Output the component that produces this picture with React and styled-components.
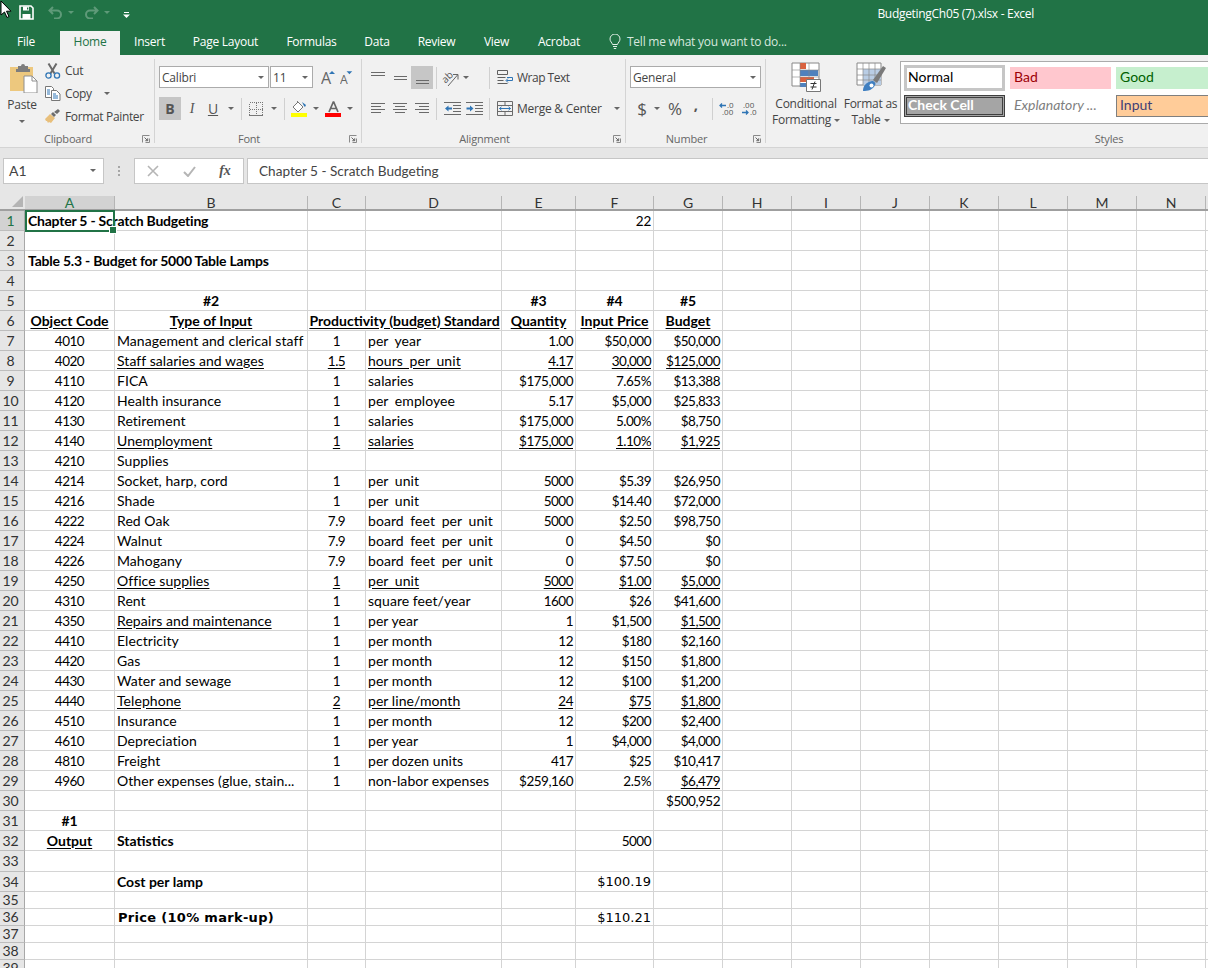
import React from "react";
import styled, { createGlobalStyle } from "styled-components";

const UI_FONT = `"Open Sans", "Noto Sans", sans-serif`;
const CELL_FONT = `Lato, "Open Sans", sans-serif`;
const WIDE_FONT = `"DejaVu Sans", sans-serif`;

const GlobalStyle = createGlobalStyle`
  html, body {
    margin: 0;
    padding: 0;
    width: 1208px;
    height: 968px;
    overflow: hidden;
    background: #fff;
    font-family: ${UI_FONT};
  }
  * { box-sizing: border-box; }
`;

const Page = styled.div`
  width: 1208px;
  height: 968px;
  overflow: hidden;
  display: flex;
  flex-direction: column;
`;

/* title bar */
const TitleBar = styled.div`
  height: 31px;
  background: #217346;
  display: flex;
  align-items: center;
  color: #fff;
  flex: none;
`;

const QuickAccess = styled.div`
  display: flex;
  align-items: center;
  height: 100%;
`;

const WindowTitle = styled.div`
  margin-left: auto;
  margin-right: 174px;
  font-size: 12px;
  letter-spacing: -0.3px;
  margin-top: -4px;
  white-space: nowrap;
`;

const TabBar = styled.div`
  height: 24px;
  background: #217346;
  display: flex;
  align-items: stretch;
  flex: none;
`;

const Tab = styled.div`
  width: ${(p) => p.$w}px;
  display: flex;
  align-items: center;
  justify-content: center;
  font-size: 12px;
  letter-spacing: -0.25px;
  padding-bottom: 3px;
  color: ${(p) => (p.$active ? "#217346" : "#fff")};
  background: ${(p) => (p.$active ? "#f1f1f1" : "transparent")};
  margin-right: ${(p) => p.$mr || 0}px;
`;

const TellMe = styled.div`
  margin-left: 14px;
  display: flex;
  align-items: center;
  gap: 6px;
  font-size: 12px;
  letter-spacing: -0.25px;
  padding-bottom: 3px;
  color: #d7e8de;
`;

/* ribbon */
const Ribbon = styled.div`
  height: 93px;
  background: #f1f1f1;
  border-bottom: 1px solid #d4d4d4;
  display: flex;
  flex: none;
  overflow: hidden;
`;

const Group = styled.div`
  width: ${(p) => p.$w}px;
  flex: none;
  display: flex;
  flex-direction: column;
  padding-left: ${(p) => p.$pad || 0}px;
`;

const GroupBody = styled.div`
  height: 75px;
  flex: none;
  display: flex;
  flex-direction: ${(p) => (p.$row ? "row" : "column")};
`;

const GroupFooter = styled.div`
  display: flex;
  align-items: center;
  height: 16px;
  margin-left: -${(p) => p.$pad || 0}px;
  padding-left: ${(p) => p.$indent || 0}px;
`;

const GroupLabel = styled.div`
  flex: 1;
  text-align: center;
  font-size: 11px;
  letter-spacing: -0.2px;
  color: #666;
`;

const Launcher = styled.svg`
  width: 8px;
  height: 8px;
  margin: 1px 4px 0 6px;
  flex: none;
`;

const GroupSep = styled.div`
  width: 1px;
  flex: none;
  margin: 4px 0;
  background: #d4d4d4;
`;

const ToolRow = styled.div`
  display: flex;
  align-items: center;
  height: ${(p) => p.$h || 23}px;
  margin-top: ${(p) => p.$mt || 0}px;
`;

const ToolBtn = styled.div`
  width: ${(p) => p.$w}px;
  height: 100%;
  flex: none;
  display: flex;
  align-items: center;
  justify-content: center;
  margin-left: ${(p) => p.$ml || 0}px;
  color: #555;
  background: ${(p) => (p.$active ? "#c6c6c6" : "transparent")};
`;

const ToolSep = styled.div`
  width: 1px;
  height: 22px;
  flex: none;
  background: #d0d0d0;
  margin-left: ${(p) => p.$ml || 0}px;
`;

const Caret = styled.i`
  display: block;
  width: 0;
  height: 0;
  flex: none;
  border-left: 3px solid transparent;
  border-right: 3px solid transparent;
  border-top: 3px solid ${(p) => p.$color || "#666"};
  margin-left: ${(p) => p.$ml || 0}px;
  margin-right: ${(p) => p.$mr || 0}px;
  margin-top: ${(p) => p.$mt || 0}px;
`;

const Select = styled.div`
  width: ${(p) => p.$w}px;
  height: 22px;
  flex: none;
  background: #fff;
  border: 1px solid #ababab;
  margin-left: ${(p) => p.$ml || 0}px;
  display: flex;
  align-items: center;
  justify-content: space-between;
  padding: 0 4px 0 2px;
  font-size: 12px;
  letter-spacing: -0.2px;
  color: #444;
`;

/* clipboard */
const PasteBtn = styled.div`
  width: 44px;
  flex: none;
  display: flex;
  flex-direction: column;
  align-items: center;
  padding-top: 8px;
  font-size: 12px;
  letter-spacing: -0.2px;
  color: #444;
`;

const PasteText = styled.div`
  margin-top: 4px;
  line-height: 16px;
`;

const ClipList = styled.div`
  padding-top: 4px;
  margin-left: 1px;
`;

const ClipItem = styled.div`
  height: 23px;
  display: flex;
  align-items: center;
  gap: 4px;
  font-size: 12px;
  letter-spacing: -0.35px;
  color: #444;
  white-space: nowrap;
`;

const IconSlot = styled.div`
  width: 16px;
  display: flex;
  justify-content: center;
  flex: none;
`;

const LabelBtn = styled.div`
  display: flex;
  align-items: center;
  margin-left: ${(p) => p.$ml || 0}px;
  gap: ${(p) => p.$gap || 4}px;
  font-size: 12px;
  letter-spacing: ${(p) => p.$track || -0.25}px;
  color: #444;
  white-space: nowrap;
`;

const BigBtn = styled.div`
  width: ${(p) => p.$w}px;
  flex: none;
  display: flex;
  flex-direction: column;
  align-items: center;
  padding-top: 7px;
  font-size: 12px;
  letter-spacing: -0.25px;
  line-height: 16px;
  color: #444;
  white-space: nowrap;
`;

const BigText = styled.div`
  margin-top: ${(p) => p.$mt || 0}px;
  display: flex;
  align-items: center;
  gap: 3px;
`;

const Gallery = styled.div`
  margin-top: 6px;
  width: 320px;
  height: 63px;
  background: #fff;
  border: 1px solid #ababab;
  padding: 3px;
  display: grid;
  grid-template-columns: 101px 101px 110px;
  grid-template-rows: 26px 26px;
  column-gap: 5px;
  row-gap: 2px;
  flex: none;
`;

const StyleChip = styled.div`
  font-family: ${CELL_FONT};
  font-size: 14px;
  display: flex;
  align-items: center;
  padding-left: ${(p) => p.$indent ?? 4}px;
  padding-bottom: 3px;
  white-space: nowrap;
  margin: ${(p) => (p.$flush ? "0" : "2px 0")};
  color: ${(p) => p.$color};
  background: ${(p) => p.$bg || "transparent"};
  border: ${(p) => p.$border || "none"};
  font-weight: ${(p) => (p.$bold ? 700 : 400)};
  font-style: ${(p) => (p.$italic ? "italic" : "normal")};
`;

/* formula bar */
const FormulaBar = styled.div`
  height: 45px;
  background: #e6e6e6;
  flex: none;
  display: flex;
  padding: 10px 0 9px 3px;
`;

const NameBox = styled.div`
  width: 101px;
  background: #fff;
  border: 1px solid #c6c6c6;
  display: flex;
  align-items: center;
  justify-content: space-between;
  padding: 0 7px 1px 5px;
  font-family: ${CELL_FONT};
  font-size: 14px;
  color: #444;
`;

const Dots = styled.div`
  width: 30px;
  flex: none;
  display: flex;
  flex-direction: column;
  align-items: center;
  justify-content: center;
  gap: 2px;
  i {
    width: 2px;
    height: 2px;
    background: #a6a6a6;
    display: block;
  }
`;

const FxBox = styled.div`
  width: 110px;
  background: #fff;
  border: 1px solid #c6c6c6;
  display: flex;
  align-items: center;
  flex: none;
`;

const FxSlot = styled.div`
  width: 36px;
  flex: none;
  display: flex;
  justify-content: center;
  align-items: center;
`;

const FxMark = styled.span`
  font-family: "Liberation Serif", serif;
  font-style: italic;
  font-weight: 700;
  font-size: 14px;
  color: #555;
`;

const FormulaInput = styled.div`
  flex: 1;
  margin-left: 3px;
  background: #fff;
  border: 1px solid #c6c6c6;
  border-right: none;
  display: flex;
  align-items: center;
  padding: 0 0 1px 11px;
  font-family: ${CELL_FONT};
  font-size: 13.6px;
  color: #444;
`;

/* sheet */
const COLUMNS = "25px 90px 193px 58px 136px 74px 78px 69px 69px 69px 69px 69px 69px 69px 69px 4px";

const Sheet = styled.div`
  position: relative;
  flex: 1;
  font-family: ${CELL_FONT};
  font-size: 14px;
  color: #000;
  overflow: hidden;
`;

const SheetRow = styled.div`
  display: grid;
  grid-template-columns: ${COLUMNS};
  grid-template-rows: minmax(0, 1fr);
  height: ${(p) => p.$h}px;
`;

const HeaderRow = styled(SheetRow)`
  background: #e6e6e6;
  border-bottom: 2px solid #9f9f9f;
`;

const Corner = styled.div`
  position: relative;
  &::after {
    content: "";
    position: absolute;
    right: 2px;
    bottom: 2px;
    width: 0;
    height: 0;
    border-left: 11px solid transparent;
    border-bottom: 11px solid #b4b4b4;
  }
`;

const ColHead = styled.div`
  display: flex;
  align-items: center;
  justify-content: center;
  line-height: 14px;
  color: ${(p) => (p.$selected ? "#217346" : "#333")};
  background: ${(p) => (p.$selected ? "#d2d2d2" : "transparent")};
  border-right: 1px solid #b5b5b5;
  margin-top: 3px;
`;

const RowHead = styled.div`
  background: ${(p) => (p.$selected ? "#d2d2d2" : "#e6e6e6")};
  color: ${(p) => (p.$selected ? "#217346" : "#333")};
  border-bottom: 1px solid #bdbdbd;
  border-right: 1px solid #a8a8a8;
  display: flex;
  align-items: center;
  justify-content: center;
  padding-right: 3px;
  line-height: 14px;
  overflow: hidden;
`;

const Cell = styled.div`
  grid-column: span ${(p) => p.$span || 1};
  border-right: 1px solid #d4d4d4;
  border-bottom: 1px solid #d4d4d4;
  display: flex;
  align-items: center;
  justify-content: ${(p) => p.$justify};
  padding: ${(p) => (p.$wide ? 1 : 0)}px 2px 0 ${(p) => p.$left || 2}px;
  white-space: nowrap;
  min-width: 0;
  line-height: 14px;
  font-family: ${(p) => (p.$wide ? WIDE_FONT : CELL_FONT)};
  font-size: ${(p) => (p.$wide ? "13px" : p.$num ? "13.5px" : "14px")};
  font-weight: ${(p) => (p.$bold ? 700 : 400)};
  letter-spacing: ${(p) => p.$track}px;
  word-spacing: ${(p) => (p.$spaced ? "3px" : "0")};
  text-decoration: ${(p) => (p.$under ? "underline" : "none")};
  text-underline-offset: 2px;
`;

const Selection = styled.div`
  position: absolute;
  left: 25px;
  top: 17px;
  width: 90px;
  height: 22px;
  border: 2px solid #217346;
  pointer-events: none;
  &::after {
    content: "";
    position: absolute;
    right: -4px;
    bottom: -4px;
    width: 6px;
    height: 6px;
    background: #217346;
    border: 1px solid #fff;
  }
`;

/* drawings */
const PointerSvg = styled.svg`
  position: absolute;
  left: 0;
  top: 0;
`;

const Arrow = () => (
  <PointerSvg width="12" height="19" viewBox="0 0 12 19">
    <path d="M1 1v14l3.5-3 2.5 5.5 2-1-2.500-5.300h4.500z" fill="#fff" stroke="#000" />
  </PointerSvg>
);

const SaveIcon = () => (
  <svg width="15" height="15" viewBox="0 0 15 15" style={{ marginLeft: 19, marginTop: -6 }}>
    <path d="M1 1h11l2 2v11H1z" fill="none" stroke="#fff" strokeWidth="1.600" />
    <path d="M4 1.500h6v4H4zM3.500 9h8v5h-8z" fill="#fff" />
    <path d="M8 2.500h1.300v2H8z" fill="#217346" />
  </svg>
);

const UndoIcon = ({ flip, ml }) => (
  <svg width="15" height="13" viewBox="0 0 15 13" style={{ marginLeft: ml, marginTop: -6, transform: flip ? "scaleX(-1)" : "none" }}>
    <path d="M5 1L1.500 4.500 5 8M2 4.500h7a4 4 0 0 1 0 8H6" fill="none" stroke="#5f9a79" strokeWidth="2" />
  </svg>
);

const QatMenu = () => (
  <svg width="7" height="6" viewBox="0 0 7 6" style={{ marginLeft: 13, marginTop: -2 }}>
    <path d="M1 0h5v1H1zM0 2.500h7L3.500 6z" fill="#fff" />
  </svg>
);

const Bulb = () => (
  <svg width="12" height="15" viewBox="0 0 12 15">
    <path d="M3.500 10.500C3 8.500 1 7.500 1 5a5 5 0 0 1 10 0c0 2.500-2 3.500-2.500 5.500zM4 12.500h4M4.800 14.500h2.400" fill="none" stroke="#e3efe8" />
  </svg>
);

const LauncherIcon = () => (
  <Launcher viewBox="0 0 8 8">
    <path d="M.5 7.500v-7h7M7.500 3.500v4h-4" fill="none" stroke="#8a8a8a" />
    <path d="M2.500 2.500l3 3M5.700 3.300v2.400H3.300" fill="none" stroke="#666" />
  </Launcher>
);

const PasteIcon = () => (
  <svg width="30" height="30" viewBox="0 0 30 30" style={{ marginLeft: 4 }}>
    <path d="M1 4h23v24H1z" fill="#edc87e" />
    <path d="M9 2h3a2 2 0 0 1 4 0h3v3h2v3H7V5h2z" fill="#7d7d7d" transform="translate(0 1)" />
    <path d="M15 13h8l5 5v12H15z" fill="#fff" stroke="#8f8f8f" />
    <path d="M23 13v5h5" fill="none" stroke="#8f8f8f" />
  </svg>
);

const ScissorsIcon = () => (
  <svg width="16" height="16" viewBox="0 0 16 16">
    <path d="M3.500 0.500l6 10M11.500 0.500l-6 10" stroke="#6a6a6a" strokeWidth="2" fill="none" />
    <circle cx="3.500" cy="12.500" r="2.600" fill="none" stroke="#2f75b5" strokeWidth="1.300" />
    <circle cx="12" cy="12.500" r="2.600" fill="none" stroke="#2f75b5" strokeWidth="1.300" />
  </svg>
);

const CopyIcon = () => (
  <svg width="16" height="15" viewBox="0 0 16 15">
    <path d="M.5.500h6l2 2v9h-8z" fill="#fff" stroke="#777" />
    <path d="M6.500 4.500h5l3.500 3.500v6.500H6.500z" fill="#fff" stroke="#777" />
    <path d="M2 4h3M2 6h3M2 8h3M8 8h3M8 10h5M8 12h5" stroke="#2f75b5" />
  </svg>
);

const PainterIcon = () => (
  <svg width="16" height="15" viewBox="0 0 16 15">
    <path d="M0 10l5-5 5 4-4 5-2-1-1 1-1-2-1 0z" fill="#e8bf7b" />
    <path d="M6 5l2-2 3 3-2 2zM9 3l4-3 2 2-3 3z" fill="#6e6e6e" />
  </svg>
);

const GrowIcon = ({ shrink }) => (
  <svg width="17" height="22" viewBox="0 0 17 22">
    <text x="0" y="18" fontFamily="Open Sans, sans-serif" fontSize={shrink ? 13 : 16} fill="#666">A</text>
    <path d={shrink ? "M7 5h6l-3 3z" : "M8 8h6l-3-3z"} fill="#2f75b5" />
  </svg>
);

const LetterB = styled.span`
  font-size: ${(p) => p.$size || 14}px;
  color: #555;
  font-weight: ${(p) => (p.$b ? 700 : 400)};
  font-style: ${(p) => (p.$i ? "italic" : "normal")};
  text-decoration: ${(p) => (p.$u ? "underline" : "none")};
  font-family: ${(p) => (p.$i ? `"Liberation Serif", serif` : UI_FONT)};
  margin-top: ${(p) => p.$mt || 0}px;
`;

const BordersIcon = () => (
  <svg width="14" height="14" viewBox="0 0 14 14" shapeRendering="crispEdges">
    <path d="M.5.500h13v13H.500zM7 .5v13M.5 7h13" fill="none" stroke="#777" strokeDasharray="1 1" />
    <path d="M0 13.500h14" stroke="#777" />
  </svg>
);

const FillIcon = () => (
  <svg width="17" height="17" viewBox="0 0 17 17">
    <path d="M2 7l5-5 5 5-5 5z" fill="#fff" stroke="#777" />
    <path d="M6 1l3 3" stroke="#777" />
    <path d="M11 2l4 3-1 2-1-1z" fill="#2f75b5" />
    <path d="M0 13h16v4H0z" fill="#ffff00" />
  </svg>
);

const FontColorIcon = () => (
  <svg width="17" height="17" viewBox="0 0 17 17">
    <path d="M8.500 1.500L4 12M8.500 1.500L13 12M5.800 8.500h5.400" fill="none" stroke="#666" strokeWidth="1.700" />
    <path d="M0 13h16v4H0z" fill="#ff0000" />
  </svg>
);

// text alignment glyph: rows of [x1, x2, y]
const LinesIcon = ({ lines }) => (
  <svg width="16" height="16" viewBox="0 0 16 16">
    {lines.map(([a, b, y], i) => (
      <path key={i} d={`M${a} ${y}.5H${b}`} stroke="#6a6a6a" />
    ))}
  </svg>
);

const OrientIcon = () => (
  <svg width="20" height="22" viewBox="0 0 20 22">
    <text x="2" y="14" transform="rotate(-45 7 11)" fontFamily="Open Sans, sans-serif" fontSize="10" fill="#555">ab</text>
    <path d="M8 19L17.500 8M13 7.500h5V12.500" fill="none" stroke="#666" />
  </svg>
);

const WrapIcon = () => (
  <svg width="17" height="17" viewBox="0 0 17 17">
    <path d="M.5 1.500h10v4H.5zM.5 8.500h8M.5 11.500h6M.5 14.500h10" fill="none" stroke="#5f5f5f" />
    <path d="M10 8.500h5.500v3h-6M11 9.500l-2 2 2 2" fill="none" stroke="#2f75b5" />
  </svg>
);

const MergeIcon = () => (
  <svg width="16" height="15" viewBox="0 0 16 15">
    <path d="M.5.500h15v14H.5zM.5 4.500h15M.5 10.500h15M8 .5v4M8 10.500v4" fill="none" stroke="#6a6a6a" />
    <path d="M2.500 7.500h11M4.500 5.800l-2 1.700 2 1.700M11.500 5.800l2 1.700-2 1.700" fill="none" stroke="#2f75b5" />
  </svg>
);

const IndentIcon = ({ out }) => (
  <svg width="17" height="13" viewBox="0 0 17 13">
    <path d="M0 .5h17M9 3.500h8M9 6.500h8M9 9.500h8M0 12.500h17" stroke="#6a6a6a" />
    <path d={out ? "M1 6.500l3.500-3v2h3.500v2H4.500v2z" : "M7.500 6.500l-3.500-3v2H.5v2H4v2z"} fill="#2f75b5" />
  </svg>
);

const DecimalIcon = ({ inc }) => (
  <svg width="16" height="15" viewBox="0 0 16 15">
    <text x={inc ? 2 : 8} y="7" fontFamily="Open Sans, sans-serif" fontSize="8" fill="#555">{inc ? ".00" : ".0"}</text>
    <text x={inc ? 9 : 3} y="14" fontFamily="Open Sans, sans-serif" fontSize="8" fill="#555">{inc ? ".0" : ".00"}</text>
    <path d={inc ? "M1 11.500h6M5 9.500l2 2-2 2" : "M1 4.500h6M3 2.500l-2 2 2 2"} fill="none" stroke="#2f75b5" strokeWidth="1.300" />
  </svg>
);

const ConditionalIcon = () => (
  <svg width="30" height="30" viewBox="0 0 30 30">
    <path d="M1 1h27v23H1z" fill="#fff" stroke="#888" />
    <path d="M9 1h6v6H9z" fill="#d9623f" />
    <path d="M9 8h18v6H9z" fill="#4f81bd" />
    <path d="M9 15h14v5H9z" fill="#d9623f" />
    <path d="M9 21h6v4H9z" fill="#4f81bd" />
    <path d="M1 8h27M1 15h27M9 1v24M18 1v15" stroke="#888" fill="none" strokeWidth=".6" />
    <path d="M15.500 17.500h14v12h-14z" fill="#fff" stroke="#777" />
    <path d="M19.500 21.500h6M19.500 25h6M24 19.500l-3 8" stroke="#333" />
  </svg>
);

const TableIcon = () => (
  <svg width="30" height="30" viewBox="0 0 30 30">
    <path d="M1 1h24v22H1z" fill="#fff" stroke="#888" />
    <path d="M7 7h18v16H7z" fill="#b9cde5" />
    <path d="M1 7h24M1 13h24M1 18h24M7 1v22M13 1v22M19 1v22" stroke="#8a8a8a" strokeWidth=".7" />
    <path d="M17 18l10-14 3 2-9 15z" fill="#7a7a7a" />
    <path d="M7 29c0-6 4-9 9-10 2 0 4 2 3 4-2 5-7 6-12 6z" fill="#3f7fc1" />
    <circle cx="15.500" cy="23.500" r="2" fill="#fff" />
  </svg>
);

const Launch = ({ indent, label, launcher = true, pad }) => (
  <GroupFooter $indent={indent} $pad={pad}>
    <GroupLabel>{label}</GroupLabel>
    {launcher && <LauncherIcon />}
  </GroupFooter>
);

const TABS = [
  ["File", 52, 8],
  ["Home", 60],
  ["Insert", 59],
  ["Page Layout", 93],
  ["Formulas", 79],
  ["Data", 52],
  ["Review", 67],
  ["View", 53],
  ["Acrobat", 72],
];

const alignTop = [[1, 15, 2], [1, 15, 5]];
const alignMid = [[2, 15, 6], [2, 15, 9]];
const alignBottom = [[2, 15, 10], [2, 15, 13]];
const alignLeft = [[1, 15, 2], [1, 11, 5], [1, 15, 8], [1, 11, 11]];
const alignCenter = [[1, 15, 2], [3, 13, 5], [1, 15, 8], [3, 13, 11]];
const alignRight = [[1, 15, 2], [5, 15, 5], [1, 15, 8], [5, 15, 11]];

const Toolbar = () => (
  <Ribbon>
    <Group $w={154}>
      <GroupBody $row>
        <PasteBtn>
          <PasteIcon />
          <PasteText>Paste</PasteText>
          <Caret $mt={7} />
        </PasteBtn>
        <ClipList>
          <ClipItem>
            <IconSlot><ScissorsIcon /></IconSlot>
            Cut
          </ClipItem>
          <ClipItem>
            <IconSlot><CopyIcon /></IconSlot>
            Copy
            <Caret $ml={8} />
          </ClipItem>
          <ClipItem>
            <IconSlot><PainterIcon /></IconSlot>
            Format Painter
          </ClipItem>
        </ClipList>
      </GroupBody>
      <Launch label="Clipboard" />
    </Group>
    <GroupSep />

    <Group $w={206} $pad={4}>
      <GroupBody>
        <ToolRow $h={22} $mt={11}>
          <Select $w={110}>
            Calibri
            <Caret />
          </Select>
          <Select $w={43} $ml={1}>
            11
            <Caret />
          </Select>
          <ToolBtn $w={21} $ml={6}><GrowIcon /></ToolBtn>
          <ToolBtn $w={16}><GrowIcon shrink /></ToolBtn>
        </ToolRow>
        <ToolRow $mt={9}>
          <ToolBtn $w={22} $active><LetterB $b>B</LetterB></ToolBtn>
          <ToolBtn $w={22}><LetterB $i>I</LetterB></ToolBtn>
          <ToolBtn $w={20}><LetterB $u>U</LetterB></ToolBtn>
          <Caret $ml={5} $mr={5} />
          <ToolSep $ml={2} />
          <ToolBtn $w={28}><BordersIcon /></ToolBtn>
          <Caret $ml={1} $mr={1} />
          <ToolSep $ml={6} />
          <ToolBtn $w={28}><FillIcon /></ToolBtn>
          <Caret />
          <ToolBtn $w={28}><FontColorIcon /></ToolBtn>
          <Caret />
        </ToolRow>
      </GroupBody>
      <Launch label="Font" pad={4} />
    </Group>
    <GroupSep />

    <Group $w={263} $pad={5}>
      <GroupBody>
        <ToolRow $mt={11}>
          <ToolBtn $w={22}><LinesIcon lines={alignTop} /></ToolBtn>
          <ToolBtn $w={22}><LinesIcon lines={alignMid} /></ToolBtn>
          <ToolBtn $w={22} $active><LinesIcon lines={alignBottom} /></ToolBtn>
          <ToolSep $ml={3} />
          <ToolBtn $w={26}><OrientIcon /></ToolBtn>
          <Caret />
          <ToolSep $ml={20} />
          <LabelBtn $ml={7} $gap={3} $track={-0.5}>
            <WrapIcon />
            Wrap Text
          </LabelBtn>
        </ToolRow>
        <ToolRow $mt={8}>
          <ToolBtn $w={22}><LinesIcon lines={alignLeft} /></ToolBtn>
          <ToolBtn $w={22}><LinesIcon lines={alignCenter} /></ToolBtn>
          <ToolBtn $w={22}><LinesIcon lines={alignRight} /></ToolBtn>
          <ToolSep $ml={3} />
          <ToolBtn $w={22} $ml={4}><IndentIcon out /></ToolBtn>
          <ToolBtn $w={22}><IndentIcon /></ToolBtn>
          <ToolSep $ml={4} />
          <LabelBtn $ml={7}>
            <MergeIcon />
            Merge &amp; Center
            <Caret $ml={8} />
          </LabelBtn>
        </ToolRow>
      </GroupBody>
      <Launch label="Alignment" pad={5} />
    </Group>
    <GroupSep />

    <Group $w={139} $pad={4}>
      <GroupBody>
        <ToolRow $h={22} $mt={11}>
          <Select $w={131}>
            General
            <Caret />
          </Select>
        </ToolRow>
        <ToolRow $mt={9}>
          <ToolBtn $w={24}><LetterB $size={17}>$</LetterB></ToolBtn>
          <Caret />
          <ToolBtn $w={30}><LetterB $size={17}>%</LetterB></ToolBtn>
          <ToolBtn $w={12}><LetterB $b $size={15} $mt={-10}>,</LetterB></ToolBtn>
          <ToolSep $ml={10} />
          <ToolBtn $w={28}><DecimalIcon /></ToolBtn>
          <ToolBtn $w={16}><DecimalIcon inc /></ToolBtn>
        </ToolRow>
      </GroupBody>
      <Launch label="Number" pad={4} />
    </Group>
    <GroupSep />

    <Group $w={442} $pad={5}>
      <GroupBody $row>
        <BigBtn $w={70}>
          <ConditionalIcon />
          <BigText $mt={4}>Conditional</BigText>
          <BigText>Formatting<Caret /></BigText>
        </BigBtn>
        <BigBtn $w={59}>
          <TableIcon />
          <BigText $mt={4}>Format as</BigText>
          <BigText>Table<Caret /></BigText>
        </BigBtn>
        <Gallery>
          <StyleChip $flush $indent={1} $color="#000" $bg="#fff" $border="3px solid #c6c6c6">Normal</StyleChip>
          <StyleChip $color="#9c0006" $bg="#ffc7ce">Bad</StyleChip>
          <StyleChip $color="#006100" $bg="#c6efce">Good</StyleChip>
          <StyleChip $bold $indent={1} $color="#fff" $bg="#a5a5a5" $border="3px double #3f3f3f">Check Cell</StyleChip>
          <StyleChip $italic $color="#7f7f7f">Explanatory ...</StyleChip>
          <StyleChip $indent={3} $color="#3f3f76" $bg="#ffcc99" $border="1px solid #7f7f7f">Input</StyleChip>
        </Gallery>
      </GroupBody>
      <Launch label="Styles" launcher={false} pad={5} indent={244} />
    </Group>
  </Ribbon>
);

const COLS = ["A", "B", "C", "D", "E", "F", "G", "H", "I", "J", "K", "L", "M", "N"];
const JUSTIFY = { 0: "center", 1: "flex-start", 2: "center", 3: "flex-start", 4: "flex-end", 5: "flex-end", 6: "flex-end" };
const NUMERIC = /^[$\d.,%]+$/;

// row data: [A, B, C, D, E, F, G], under lists the underlined column indexes
const data = (cells, extra) => ({ cells, ...extra });
const LINE = [1, 2, 3, 4, 5, 6];

const ROWS = {
  1: data(["Chapter 5 - Scratch Budgeting", null, "", "", "", "22", ""], { boldCols: [0], leftFirst: true, tight: true }),
  3: data(["Table 5.3 - Budget for 5000 Table Lamps", null], { boldCols: [0], leftFirst: true, tight: true }),
  5: data(["", "#2", "", "", "#3", "#4", "#5"], { bold: true, centered: true }),
  6: data(["Object Code", "Type of Input", "Productivity (budget) Standard", null, "Quantity", "Input Price", "Budget"], {
    bold: true,
    centered: true,
    under: [0, 1, 2, 4, 5, 6],
  }),
  7: data(["4010", "Management and clerical staff", "1", "per year", "1.00", "$50,000", "$50,000"], { spaced: true }),
  8: data(["4020", "Staff salaries and wages", "1.5", "hours per unit", "4.17", "30,000", "$125,000"], { spaced: true, under: LINE }),
  9: data(["4110", "FICA", "1", "salaries", "$175,000", "7.65%", "$13,388"]),
  10: data(["4120", "Health insurance", "1", "per employee", "5.17", "$5,000", "$25,833"], { spaced: true }),
  11: data(["4130", "Retirement", "1", "salaries", "$175,000", "5.00%", "$8,750"]),
  12: data(["4140", "Unemployment", "1", "salaries", "$175,000", "1.10%", "$1,925"], { under: LINE }),
  13: data(["4210", "Supplies"]),
  14: data(["4214", "Socket, harp, cord", "1", "per unit", "5000", "$5.39", "$26,950"], { spaced: true }),
  15: data(["4216", "Shade", "1", "per unit", "5000", "$14.40", "$72,000"], { spaced: true }),
  16: data(["4222", "Red Oak", "7.9", "board feet per unit", "5000", "$2.50", "$98,750"], { spaced: true }),
  17: data(["4224", "Walnut", "7.9", "board feet per unit", "0", "$4.50", "$0"], { spaced: true }),
  18: data(["4226", "Mahogany", "7.9", "board feet per unit", "0", "$7.50", "$0"], { spaced: true }),
  19: data(["4250", "Office supplies", "1", "per unit", "5000", "$1.00", "$5,000"], { spaced: true, under: LINE }),
  20: data(["4310", "Rent", "1", "square feet/year", "1600", "$26", "$41,600"]),
  21: data(["4350", "Repairs and maintenance", "1", "per year", "1", "$1,500", "$1,500"], { under: [1, 6] }),
  22: data(["4410", "Electricity", "1", "per month", "12", "$180", "$2,160"]),
  23: data(["4420", "Gas", "1", "per month", "12", "$150", "$1,800"]),
  24: data(["4430", "Water and sewage", "1", "per month", "12", "$100", "$1,200"]),
  25: data(["4440", "Telephone", "2", "per line/month", "24", "$75", "$1,800"], { under: LINE }),
  26: data(["4510", "Insurance", "1", "per month", "12", "$200", "$2,400"]),
  27: data(["4610", "Depreciation", "1", "per year", "1", "$4,000", "$4,000"]),
  28: data(["4810", "Freight", "1", "per dozen units", "417", "$25", "$10,417"]),
  29: data(["4960", "Other expenses (glue, stain...", "1", "non-labor expenses", "$259,160", "2.5%", "$6,479"], { under: [6] }),
  30: data(["", "", "", "", "", "", "$500,952"]),
  31: data(["#1"], { boldCols: [0] }),
  32: data(["Output", "Statistics", "", "", "", "5000"], { boldCols: [0, 1], under: [0] }),
  34: data(["", "Cost per lamp", "", "", "", "$100.19"], { boldCols: [1], wideCols: [5] }),
  36: data(["", "Price (10% mark-up)", "", "", "", "$110.21"], { boldCols: [1], wideCols: [1, 5] }),
};

const rowHeight = (n) => {
  if (n === 33) return 21;
  if (n >= 35) return 17;
  return 20;
};

// per-cell tracking, tuned so the substitute font keeps Calibri's line widths
const trackingFor = (value, row, col) => {
  if (row?.wideCols?.includes(col)) return row?.boldCols?.includes(col) ? 0.3 : 0;
  if (row?.tight) return -0.22;
  if (NUMERIC.test(value)) return -0.5;
  if (row?.bold || row?.boldCols?.includes(col)) return 0;
  return 0.06;
};

const RowCells = ({ row }) => {
  const cells = [];
  const values = row ? row.cells : [];
  for (let col = 0; col < 15; col++) {
    const value = values[col] ?? "";
    const span = values[col + 1] === null ? 2 : 1;
    const wide = row?.wideCols?.includes(col);
    cells.push(
      <Cell
        key={col}
        $span={span}
        $justify={row?.centered ? "center" : row?.leftFirst && col === 0 ? "flex-start" : JUSTIFY[col] || "flex-start"}
        $left={row?.leftFirst && col === 0 ? 3 : wide && col === 1 ? 3 : 2}
        $bold={row?.bold || row?.boldCols?.includes(col)}
        $under={row?.under?.includes(col)}
        $wide={wide}
        $num={NUMERIC.test(value)}
        $track={trackingFor(value, row, col)}
        $spaced={row?.spaced && col === 3}
      >
        {value}
      </Cell>
    );
    if (span === 2) col++;
  }
  return cells;
};

const rowNumbers = Array.from({ length: 39 }, (_, i) => i + 1);

const App = () => (
  <Page>
    <GlobalStyle />
    <Arrow />
    <TitleBar>
      <QuickAccess>
        <SaveIcon />
        <UndoIcon ml={14} />
        <Caret $ml={5} $mt={-6} $color="#5f9a79" />
        <UndoIcon ml={10} flip />
        <Caret $ml={5} $mt={-6} $color="#5f9a79" />
        <QatMenu />
      </QuickAccess>
      <WindowTitle>BudgetingCh05 (7).xlsx - Excel</WindowTitle>
    </TitleBar>
    <TabBar>
      {TABS.map(([name, w, mr]) => (
        <Tab key={name} $w={w} $mr={mr} $active={name === "Home"}>
          {name}
        </Tab>
      ))}
      <TellMe>
        <Bulb />
        Tell me what you want to do...
      </TellMe>
    </TabBar>
    <Toolbar />
    <FormulaBar>
      <NameBox>
        A1
        <Caret />
      </NameBox>
      <Dots>
        <i />
        <i />
        <i />
      </Dots>
      <FxBox>
        <FxSlot>
          <svg width="12" height="12" viewBox="0 0 12 12">
            <path d="M1 1l10 10M11 1L1 11" stroke="#b5b5b5" strokeWidth="1.600" />
          </svg>
        </FxSlot>
        <FxSlot>
          <svg width="13" height="11" viewBox="0 0 13 11">
            <path d="M1 6l4 4 7-9" fill="none" stroke="#b5b5b5" strokeWidth="2" />
          </svg>
        </FxSlot>
        <FxSlot><FxMark>fx</FxMark></FxSlot>
      </FxBox>
      <FormulaInput>Chapter 5 - Scratch Budgeting</FormulaInput>
    </FormulaBar>
    <Sheet>
      <HeaderRow $h={18}>
        <Corner />
        {COLS.map((c) => (
          <ColHead key={c} $selected={c === "A"}>
            {c}
          </ColHead>
        ))}
      </HeaderRow>
      {rowNumbers.map((n) => (
        <SheetRow key={n} $h={rowHeight(n)}>
          <RowHead $selected={n === 1}>{n}</RowHead>
          <RowCells row={ROWS[n]} />
        </SheetRow>
      ))}
      <Selection />
    </Sheet>
  </Page>
);

export default App;
